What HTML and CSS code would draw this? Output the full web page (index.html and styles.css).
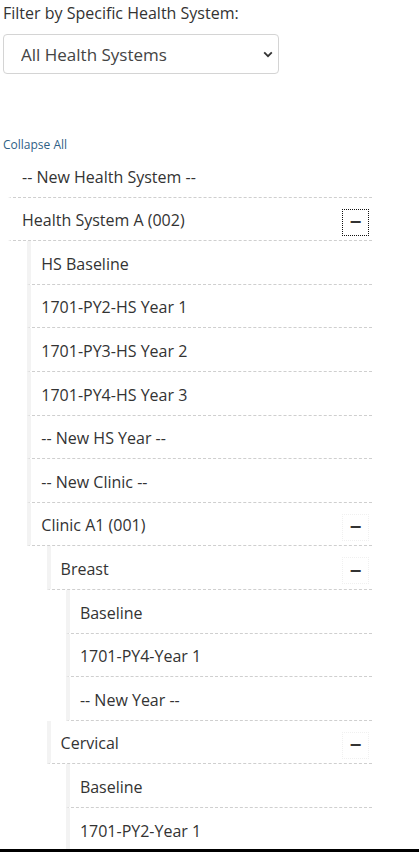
FILE: index.html
```html
<!DOCTYPE html>
<html lang="en">
<head>
    <meta charset="UTF-8">
    <meta name="viewport" content="width=device-width, initial-scale=1.0">
    <title>Health System Tree</title>
    <link rel="stylesheet" href="styles.css">
</head>
<body>
    <div class="filter">
        <label for="hs-filter">Filter by Specific Health System:</label>
        <div class="select-wrap">
            <select id="hs-filter">
                <option>All Health Systems</option>
                <option>Health System A (002)</option>
            </select>
            <svg class="chevron" width="10" height="7" viewBox="0 0 10 7">
                <path d="M1.2 1.4 L5 5.2 L8.8 1.4" fill="none" stroke="#333" stroke-width="1.8"/>
            </svg>
        </div>
    </div>

    <a class="collapse-all" href="#">Collapse All</a>

    <ul class="tree">
        <li><div class="node">-- New Health System --</div></li>
        <li>
            <div class="node">Health System A (002) <button class="toggle focused">&minus;</button></div>
            <ul>
                <li><div class="node">HS Baseline</div></li>
                <li><div class="node">1701-PY2-HS Year 1</div></li>
                <li><div class="node">1701-PY3-HS Year 2</div></li>
                <li><div class="node">1701-PY4-HS Year 3</div></li>
                <li><div class="node">-- New HS Year --</div></li>
                <li><div class="node">-- New Clinic --</div></li>
                <li>
                    <div class="node">Clinic A1 (001) <button class="toggle">&minus;</button></div>
                    <ul>
                        <li>
                            <div class="node">Breast <button class="toggle">&minus;</button></div>
                            <ul>
                                <li><div class="node">Baseline</div></li>
                                <li><div class="node">1701-PY4-Year 1</div></li>
                                <li><div class="node">-- New Year --</div></li>
                            </ul>
                        </li>
                        <li>
                            <div class="node">Cervical <button class="toggle">&minus;</button></div>
                            <ul>
                                <li><div class="node">Baseline</div></li>
                                <li><div class="node">1701-PY2-Year 1</div></li>
                            </ul>
                        </li>
                    </ul>
                </li>
            </ul>
        </li>
    </ul>

    <div class="screen-edge"></div>
</body>
</html>
```

FILE: styles.css
```css
body {
    margin: 0;
    padding: 1px 3px 0 3px;
    font-family: "Open Sans", "Noto Sans", sans-serif;
    font-size: 16px;
    line-height: 24px;
    color: #333;
    background: #fff;
    overflow: hidden;
    height: 851px;
}
.filter label {
    display: block;
    margin-bottom: 9px;
}
.select-wrap {
    position: relative;
    width: 276px;
}
.select-wrap select {
    appearance: none;
    -webkit-appearance: none;
    width: 100%;
    height: 40px;
    padding: 0 30px 0 17px;
    font-family: inherit;
    font-size: 17px;
    color: #444;
    background: #fff;
    border: 1px solid #d4d4d4;
    border-radius: 4px;
}
.chevron {
    position: absolute;
    right: 6px;
    top: 17px;
}
.collapse-all {
    display: block;
    margin-top: 62px;
    font-size: 12px;
    line-height: 18px;
    color: #2f5f86;
    text-decoration: none;
}
.tree,
.tree ul {
    list-style: none;
    margin: 0;
    padding: 0;
}
.tree {
    margin: 0 44px 0 5px;
}
.tree ul {
    margin-left: 19.3px;
}
.node {
    display: flex;
    align-items: center;
    justify-content: space-between;
    min-height: 24px;
    padding: 10.6px 3px 8px 10px;
    border-left: 4px solid #f3f3f3;
    border-bottom: 1px dashed #cfcfcf;
}
.tree > li > .node {
    border-left-color: transparent;
}
.toggle {
    width: 27px;
    height: 27px;
    padding: 0;
    margin: -4px 0 -8px 0;
    font-family: "DejaVu Sans", sans-serif;
    font-size: 16px;
    font-weight: bold;
    line-height: 22px;
    color: #333;
    background: #fff;
    border: 1px dotted #f0f0f0;
}
.toggle.focused {
    border: 1.5px dotted #111;
}
.screen-edge {
    position: fixed;
    left: 0;
    right: 0;
    bottom: 0;
    height: 3px;
    background: #000;
}
```
